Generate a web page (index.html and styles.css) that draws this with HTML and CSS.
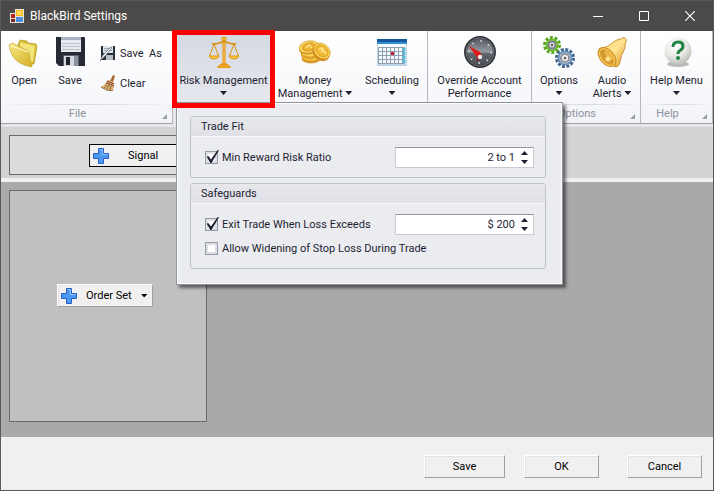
FILE: index.html
```html
<!DOCTYPE html>
<html lang="en">
<head>
    <meta charset="UTF-8">
    <meta name="viewport" content="width=device-width, initial-scale=1.0">
    <title>BlackBird Settings</title>
    <link rel="stylesheet" href="styles.css">
</head>
<body>

    <!-- Title bar -->
    <header class="titlebar">
        <svg class="app-icon" width="14" height="14" viewBox="0 0 14 14">
            <rect width="14" height="14" fill="#e8e4dc"/>
            <rect x="1" y="5" width="4" height="4" fill="#b8201c"/>
            <rect x="6" y="1" width="7" height="6" fill="#f2b81c"/>
            <rect x="7" y="2" width="5" height="4" fill="#fbd75a"/>
            <rect x="1" y="10" width="4" height="3" fill="#7a2420"/>
            <rect x="6" y="8" width="7" height="5" fill="#4a8fe0"/>
            <path d="M0 0h5v4H0z" fill="#4c4a48"/>
        </svg>
        <h1>BlackBird Settings</h1>
        <div class="window-buttons">
            <button aria-label="Minimize"><svg width="10" height="10"><path d="M0 5.5h10" stroke="#fff"/></svg></button>
            <button aria-label="Maximize"><svg width="10" height="10"><path d="M.5.5h9v9h-9z" fill="none" stroke="#fff"/></svg></button>
            <button aria-label="Close"><svg width="10" height="10"><path d="M0 0l10 10M10 0L0 10" stroke="#fff" stroke-width="1.2"/></svg></button>
        </div>
    </header>

    <!-- Ribbon -->
    <nav class="ribbon">
        <section class="group group-file">
            <div class="tools">
                <button class="tool tool-small">
                    <svg width="32" height="32" viewBox="0 0 32 32">
                        <defs><linearGradient id="fold" x1="0" y1="0" x2="1" y2="1"><stop offset="0" stop-color="#f8ea86"/><stop offset="1" stop-color="#d4ae24"/></linearGradient></defs>
                        <path d="M10 8l2-4 7 1 1 2 8 1 1 3-3 17-9 1z" fill="#d6ba32" stroke="#b89c22" stroke-width=".7"/>
                        <path d="M12 6l15 4-2 16H13z" fill="#f2e37a"/>
                        <path d="M1 9l4-2 3 2 10 5q3 1 3 4l3 13q-11-2-16-7-5-4-7-15z" fill="url(#fold)" stroke="#c6a52b" stroke-width=".7"/>
                        <path d="M2 10q9 2 18 6" fill="none" stroke="#fffbd5"/>
                    </svg>
                    <span>Open</span>
                </button>
                <button class="tool tool-small">
                    <svg width="32" height="32" viewBox="0 0 32 32">
                        <path d="M2 1h28q1 0 1 1v28H5l-3-3z" fill="#252a35"/>
                        <path d="M7 1h20v15H7z" fill="#e7ebef"/>
                        <path d="M7 1h20v3H7z" fill="#a8b6c3"/>
                        <path d="M8 7.500h18M8 10.500h18M8 13.500h18" stroke="#bcc2ca"/>
                        <path d="M9 19h16v11H9z" fill="#5a606b"/>
                        <path d="M10 20h10v10H10z" fill="#d5d8dd"/>
                        <path d="M12 21h4v8h-4z" fill="#20242e"/>
                        <path d="M20 20h4v10h-4z" fill="#8d939e"/>
                    </svg>
                    <span>Save</span>
                </button>
                <div class="tool-list">
                    <button class="tool-row">
                        <svg width="16" height="16" viewBox="0 0 16 16">
                            <path d="M1 1h14v14H1z" fill="#2b303b"/>
                            <path d="M3 1h10v7H3z" fill="#dfe6ec"/>
                            <path d="M4 3.500h8M4 5.500h8" stroke="#9aa7b4"/>
                            <path d="M6 10h7v5H6z" fill="#b9bec6"/>
                            <path d="M0 16l3-6 8-8 1 1-7 8z" fill="#f1f3f5" stroke="#69717d" stroke-width=".7"/>
                        </svg>
                        <span>Save&nbsp; As</span>
                    </button>
                    <button class="tool-row">
                        <svg width="16" height="16" viewBox="0 0 16 16">
                            <path d="M10 6l3-6 2 1-2 6z" fill="#a5662a"/>
                            <path d="M7 6l2-1 5 3v3l-1 5q-7 0-12-4 4-2 6-6z" fill="#d8b070"/>
                            <path d="M7 6l7 3M6 8l8 3" stroke="#8c4c38" stroke-width="1.200"/>
                            <path d="M4 13l3-3M7 14l2-4M10 15l1-4" stroke="#84572e" stroke-width=".8"/>
                            <path d="M1 12q5 4 12 4" fill="none" stroke="#967044"/>
                        </svg>
                        <span>Clear</span>
                    </button>
                </div>
            </div>
            <footer class="caption"><span>File</span><i class="launcher"></i></footer>
        </section>

        <section class="group group-manage">
            <div class="tools">
                <div class="menu-holder">
                    <button class="tool tool-risk active" aria-expanded="true">
                        <svg width="32" height="32" viewBox="0 0 32 32" fill="none" stroke="#dc9416">
                            <path d="M15 4h2v24h-2z" fill="#ffd050" stroke="#e28c12"/>
                            <circle cx="16" cy="3" r="2" fill="#ffbd30"/>
                            <path d="M4 8q7 0 12-3 5 3 12 3" stroke-width="2"/>
                            <path d="M6 8L1.500 20M6 8l4.500 12M26 8l-4.500 12M26 8l4.500 12"/>
                            <path d="M1 20h10q-1 3-5 3t-5-3zM21 20h10q-1 3-5 3t-5-3z" fill="#ffc93c"/>
                            <path d="M13 28h6l1 2h2v2H10v-2h2z" fill="#f5a31e"/>
                        </svg>
                        <span>Risk Management</span>
                        <i class="arrow"></i>
                    </button>

                    <!-- Risk Management dropdown -->
                    <form class="popup">
                        <fieldset class="box">
                            <legend>Trade Fit</legend>
                            <div class="row">
                                <input type="checkbox" id="min_ratio" checked>
                                <label for="min_ratio">Min Reward Risk Ratio</label>
                                <div class="spin">
                                    <input type="text" value="2 to 1" aria-label="Min Reward Risk Ratio value">
                                    <div class="spin-buttons">
                                        <button type="button" class="up" aria-label="Increase ratio"></button>
                                        <button type="button" class="down" aria-label="Decrease ratio"></button>
                                    </div>
                                </div>
                            </div>
                        </fieldset>
                        <fieldset class="box">
                            <legend>Safeguards</legend>
                            <div class="row">
                                <input type="checkbox" id="exit_loss" checked>
                                <label for="exit_loss">Exit Trade When Loss Exceeds</label>
                                <div class="spin">
                                    <input type="text" value="$ 200" aria-label="Loss amount">
                                    <div class="spin-buttons">
                                        <button type="button" class="up" aria-label="Increase loss"></button>
                                        <button type="button" class="down" aria-label="Decrease loss"></button>
                                    </div>
                                </div>
                            </div>
                            <div class="row">
                                <input type="checkbox" id="allow_widening">
                                <label for="allow_widening">Allow Widening of Stop Loss During Trade</label>
                            </div>
                        </fieldset>
                    </form>
                    <div class="highlight"></div>
                </div>
                <button class="tool tool-money">
                    <svg width="32" height="32" viewBox="0 0 32 32" stroke="#c98c1e" stroke-width=".6">
                        <ellipse cx="12" cy="23" rx="9" ry="4" fill="#dc9720"/>
                        <ellipse cx="12" cy="21" rx="9" ry="4" fill="#ffd14e"/>
                        <ellipse cx="11" cy="18" rx="9" ry="5" fill="#e9a82c"/>
                        <ellipse cx="11" cy="16" rx="9" ry="5" fill="#ffd558"/>
                        <ellipse cx="10" cy="12" rx="10" ry="6" fill="#d9921c" transform="rotate(-10 10 12)"/>
                        <ellipse cx="10" cy="11" rx="10" ry="6" fill="#ffdc66" transform="rotate(-10 10 11)"/>
                        <ellipse cx="10" cy="11" rx="7" ry="4" fill="#f0b22e" transform="rotate(-10 10 11)"/>
                        <ellipse cx="22" cy="17" rx="9" ry="7" fill="#d48b18" transform="rotate(40 22 17)"/>
                        <ellipse cx="23" cy="15" rx="9" ry="7" fill="#ffdb5e" transform="rotate(40 23 15)"/>
                        <ellipse cx="23" cy="15" rx="7" ry="5" fill="#f5b832" transform="rotate(40 23 15)"/>
                        <path d="M20 13l3-1 4 6M23 12v5M7 12l3-3 3 3" fill="none" stroke="#ffe58a" stroke-width="1.500"/>
                    </svg>
                    <span>Money</span>
                    <span>Management <i class="arrow"></i></span>
                </button>
                <button class="tool tool-schedule">
                    <svg width="32" height="32" viewBox="0 0 32 32">
                        <path d="M1 4h30v26H1z" fill="#bdd3e6"/>
                        <path d="M1 3h30v5H1z" fill="#2f8fce"/>
                        <path d="M1 3h30v3H1z" fill="#14599f"/>
                        <path d="M2 8h28v20H2z" fill="#f7fafd"/>
                        <path d="M2 11h27v17H2z" fill="#8fa0b0"/>
                        <path d="M3 13.500h25M3 17.500h25M3 21.500h25M3 25.500h25" stroke="#f5f9fd" stroke-width="3" stroke-dasharray="3 1"/>
                        <path d="M28 12v3M28 16v3M28 20v3M28 24v3" stroke="#4fbfe0" stroke-width="3"/>
                        <path d="M15 16h3v3h-3z" fill="#d52033"/>
                    </svg>
                    <span>Scheduling</span>
                    <i class="arrow"></i>
                </button>
            </div>
            <footer class="caption"></footer>
        </section>

        <section class="group group-override">
            <div class="tools">
                <button class="tool tool-override">
                    <svg width="32" height="32" viewBox="0 0 32 32">
                        <defs><linearGradient id="dial" x1="0" y1="0" x2="0" y2="1"><stop offset="0" stop-color="#4e5359"/><stop offset=".5" stop-color="#979ca2"/><stop offset=".55" stop-color="#62676d"/><stop offset="1" stop-color="#474c52"/></linearGradient></defs>
                        <circle cx="16" cy="16" r="14.500" fill="url(#dial)" stroke="#33363b" stroke-width="3"/>
                        <circle cx="16" cy="16" r="14" fill="none" stroke="#8b8e93" stroke-width=".7"/>
                        <circle cx="16" cy="16" r="11" fill="none" stroke="#c9ccd0" stroke-width="2" stroke-dasharray="1.500 7.140"/>
                        <path d="M5 10l11 6 2 4-2 3-4-3z" fill="#e01818"/>
                        <path d="M14 21l3 2-5 2z" fill="#b01010"/>
                        <circle cx="16" cy="21" r="2.200" fill="#f2f2f2"/>
                    </svg>
                    <span>Override Account</span>
                    <span>Performance</span>
                </button>
            </div>
            <footer class="caption"></footer>
        </section>

        <section class="group group-options">
            <div class="tools">
                <button class="tool tool-options">
                    <svg width="32" height="32" viewBox="0 0 32 32" fill="none">
                        <circle cx="9" cy="9" r="7.500" stroke="#58a51c" stroke-width="3" stroke-dasharray="2.900 1.812"/>
                        <circle cx="9" cy="9" r="5.500" fill="#e2e7e2" stroke="#67b82b" stroke-width="2"/>
                        <circle cx="9" cy="9" r="3.500" fill="#fff" stroke="#777d84" stroke-width="2"/>
                        <circle cx="9" cy="9" r="1.500" fill="#5d6269"/>
                        <circle cx="22" cy="22" r="8.500" stroke="#41658d" stroke-width="3" stroke-dasharray="2.900 1.551"/>
                        <circle cx="22" cy="22" r="6.500" fill="#dde2e8" stroke="#668fb9" stroke-width="2"/>
                        <circle cx="22" cy="22" r="4" fill="#fff" stroke="#8a9098" stroke-width="2"/>
                        <circle cx="22" cy="22" r="1.500" fill="#5d6269"/>
                    </svg>
                    <span>Options</span>
                    <i class="arrow"></i>
                </button>
                <button class="tool tool-audio">
                    <svg width="32" height="32" viewBox="0 0 32 32">
                        <defs><linearGradient id="bell" x1="0" y1="0" x2="1" y2="1"><stop offset="0" stop-color="#ffd66e"/><stop offset=".5" stop-color="#ffe494"/><stop offset="1" stop-color="#d89520"/></linearGradient></defs>
                        <path d="M3 13q8-1 16-8 3-2 6-2 1-2 4-1 2 1 1 4l-1 2q1 2-1 6-3 5-4 12-1 5-5 5z" fill="url(#bell)" stroke="#c08018" stroke-width=".8"/>
                        <ellipse cx="11" cy="21" rx="7" ry="11" transform="rotate(-40 11 21)" fill="#f7c552" stroke="#c58720"/>
                        <ellipse cx="11" cy="21" rx="5" ry="9" transform="rotate(-40 11 21)" fill="#d59a32"/>
                        <ellipse cx="13" cy="19" rx="3" ry="6" transform="rotate(-40 13 19)" fill="#eab64a"/>
                        <circle cx="12" cy="23" r="2.500" fill="#ffe08a"/>
                    </svg>
                    <span>Audio</span>
                    <span>Alerts <i class="arrow"></i></span>
                </button>
            </div>
            <footer class="caption"><span>Options</span><i class="launcher"></i></footer>
        </section>

        <section class="group group-help">
            <div class="tools">
                <button class="tool tool-help">
                    <svg width="32" height="32" viewBox="0 0 32 32">
                        <defs><radialGradient id="ball" cx=".4" cy=".3" r=".7"><stop offset="0" stop-color="#fff"/><stop offset=".6" stop-color="#e8e8e4"/><stop offset="1" stop-color="#c0c0ba"/></radialGradient></defs>
                        <ellipse cx="17" cy="28" rx="11" ry="3" fill="#b9b9b7"/>
                        <circle cx="17" cy="15" r="13.500" fill="url(#ball)"/>
                        <path d="M12 11q0-5 5-5t5 4q0 3-3 4.500-2 1-2 3.500" fill="none" stroke="#238445" stroke-width="3"/>
                        <circle cx="17" cy="22" r="2" fill="#238445"/>
                    </svg>
                    <span>Help Menu</span>
                    <i class="arrow"></i>
                </button>
            </div>
            <footer class="caption"><span>Help</span><i class="launcher"></i></footer>
        </section>
    </nav>

    <!-- Signal strip -->
    <section class="signals">
        <div class="signal-box">
            <button class="add-button add-signal">
                <svg width="16" height="16" viewBox="0 0 16 16"><path d="M5.500.5h5v5h5v5h-5v5h-5v-5h-5v-5h5z" fill="#4d98f0" stroke="#2660c4"/><path d="M6.500 1.500h3v5h5" fill="none" stroke="#8fc3fa"/></svg>
                <span>Signal</span>
            </button>
        </div>
    </section>

    <!-- Order sets -->
    <main class="orders">
        <div class="order-box">
            <button class="add-button add-order">
                <svg width="16" height="16" viewBox="0 0 16 16"><path d="M5.500.5h5v5h5v5h-5v5h-5v-5h-5v-5h5z" fill="#4d98f0" stroke="#2660c4"/><path d="M6.500 1.500h3v5h5" fill="none" stroke="#8fc3fa"/></svg>
                <span>Order Set</span>
                <i class="arrow"></i>
            </button>
        </div>
    </main>

    <footer class="actions">
        <button class="save">Save</button>
        <button>OK</button>
        <button class="cancel">Cancel</button>
    </footer>

</body>
</html>
```
FILE: styles.css
```css
* { box-sizing: border-box; }
body { margin: 0; min-height: 100vh; display: flex; flex-direction: column; border: 1px solid #5a5957; font-family: Roboto, "DejaVu Sans Condensed", sans-serif; font-size: 11px; line-height: 13px; color: #1e1e32; background: #f0f0f0; }
button { font: inherit; color: inherit; background: none; border: none; padding: 0; margin: 0; }
svg { display: block; flex: none; }

/* title bar */
.titlebar { display: flex; align-items: center; height: 30px; padding-left: 9px; background: #4c4a48; color: #fff; }
.titlebar h1 { flex: 1; margin: 0 0 0 6px; font: 12px/16px Roboto, "Noto Sans", sans-serif; }
.window-buttons { display: flex; }
.window-buttons button { display: flex; align-items: center; justify-content: center; width: 46px; height: 30px; }

/* ribbon */
.ribbon { display: flex; height: 96px; background: #e4e6eb; border-bottom: 3px solid #e4e6ea; }
.group { display: flex; flex-direction: column; flex: none; background: linear-gradient(#fff, #f3f4f8); border-right: 1px solid #b4b7c2; border-bottom: 1px solid #a0a3af; }
.group-file { width: 172px; margin-right: 3px; }
.group-manage { width: 252px; border-left: 1px solid #b4b7c2; }
.group-override { width: 104px; }
.group-options { width: 109px; }
.group-help { flex: 1; }
.tools { display: flex; height: 73px; }
.group-manage .tools, .group-options .tools { gap: 1px; }
.tool { display: flex; flex-direction: column; align-items: center; padding-top: 5px; white-space: nowrap; }
.tool svg { margin-bottom: 6px; }
.tool > .arrow { margin-top: 4px; }
.tool-small { width: 46px; }
.tool-risk { width: 93px; height: 72px; }
.tool-money { width: 88px; }
.tool-schedule { width: 64px; }
.tool-override, .tool-help { flex: 1; }
.tool-options { width: 54px; }
.tool-audio { width: 50px; }
.active { background: linear-gradient(#d4d8e1, #e6e8ee); }
.tool-list { display: flex; flex-direction: column; gap: 14px; padding: 14px 0 0 7px; }
.tool-row { display: flex; align-items: center; gap: 4px; height: 16px; white-space: nowrap; }
.arrow { display: inline-block; width: 7px; height: 4px; margin-bottom: 2px; background: #1e1e32; clip-path: polygon(0 0, 100% 0, 50% 100%); }
.caption { position: relative; height: 19px; padding: 3px 18px 0 0; text-align: center; color: #8d90a0; background: linear-gradient(90deg, #f3f4f8, #d6d8df, #f3f4f8) top / 100% 1px no-repeat; }
.launcher { position: absolute; right: 5px; bottom: 4px; width: 5px; height: 5px; background: #9a9dab; clip-path: polygon(100% 0, 100% 100%, 0 100%); }

/* dropdown under Risk Management */
.menu-holder { position: relative; }
.highlight { position: absolute; top: -1px; left: -5px; right: -5px; height: 78px; border: 5px solid #ff0000; z-index: 3; pointer-events: none; }
.popup { position: absolute; top: 71px; left: -1px; z-index: 2; width: 387px; padding: 13px 16px 15px 13px; display: flex; flex-direction: column; gap: 5px; background: #ebecf0; border: 1px solid #8f929f; box-shadow: inset 0 0 0 1px #fff, 3px 3px 3px rgba(0, 0, 0, 0.5); }
.box { margin: 0; padding: 0 0 9px; min-width: 0; border: 1px solid #bfc1c9; border-radius: 3px; }
.box legend { float: left; width: 100%; height: 20px; padding: 3px 10px; background: linear-gradient(#e7e8ec, #e0e1e6); border-bottom: 1px solid #f8f8fa; }
.row { clear: both; display: flex; align-items: center; min-height: 26px; padding: 0 11px 0 14px; }
.box legend + .row { padding-top: 10px; min-height: 31px; }
.box:last-child { padding-bottom: 7px; }
.row label { margin-left: 4px; }
.row input[type="checkbox"] { appearance: none; position: relative; width: 13px; height: 13px; margin: 0; background: #fff; border: 1px solid #9699a6; box-shadow: inset 0 0 0 2px #dddfe5; }
.row input[type="checkbox"]:checked::after { content: ""; position: absolute; left: 0; top: -2px; width: 13px; height: 13px; background: #1e1e32; clip-path: polygon(5% 52%, 18% 46%, 38% 74%, 90% 0, 100% 2%, 42% 100%, 34% 100%); }
.spin { display: flex; width: 139px; height: 21px; margin-left: auto; background: #fff; border: 1px solid #c9cbd2; border-top-color: #9396a2; }
.spin input { flex: 1; min-width: 0; border: none; padding: 0 3px 0 0; font: inherit; color: inherit; background: none; text-align: right; }
.spin-buttons { display: flex; flex-direction: column; justify-content: space-between; width: 15px; padding: 3px 4px 3px 3px; }
.spin-buttons button { width: 7px; height: 4px; background: #1e1e32; }
.up { clip-path: polygon(50% 0, 100% 100%, 0 100%); }
.down { clip-path: polygon(0 0, 100% 0, 50% 100%); }

/* work area */
.signals { padding: 8px 8px 3px; background: #d3d3d3; border-bottom: 4px solid #f0f0f0; }
.signal-box { display: flex; width: 198px; height: 40px; padding: 8px 0 0 79px; background: #dcdcdc; border: 1px solid #696969; }
.add-button { display: flex; align-items: center; height: 23px; color: #000; background: #f0f0f0; white-space: nowrap; }
.add-signal { width: 100px; padding-left: 3px; gap: 19px; border: 1px solid #000; }
.orders { flex: 1; display: flex; padding: 8px 8px 15px; background: #a9a9a9; }
.order-box { display: flex; align-items: flex-start; width: 198px; padding: 93px 0 0 47px; background: #c0c0c0; border: 1px solid #696969; }
.add-order { padding: 0 4px 0 3px; gap: 9px; }
.add-order, .actions button { border: 1px solid #fff; border-right-color: #a0a0a0; border-bottom-color: #a0a0a0; box-shadow: inset 1px 1px 0 #e3e3e3; }
.add-order .arrow { background: #000; margin-bottom: 0; }
.actions { display: flex; justify-content: flex-end; gap: 19px; padding: 18px 11px 12px; background: #f0f0f0; }
.actions button { width: 75px; height: 23px; color: #000; }
.actions .save { width: 81px; }
.actions .cancel { margin-left: 9px; }
```
